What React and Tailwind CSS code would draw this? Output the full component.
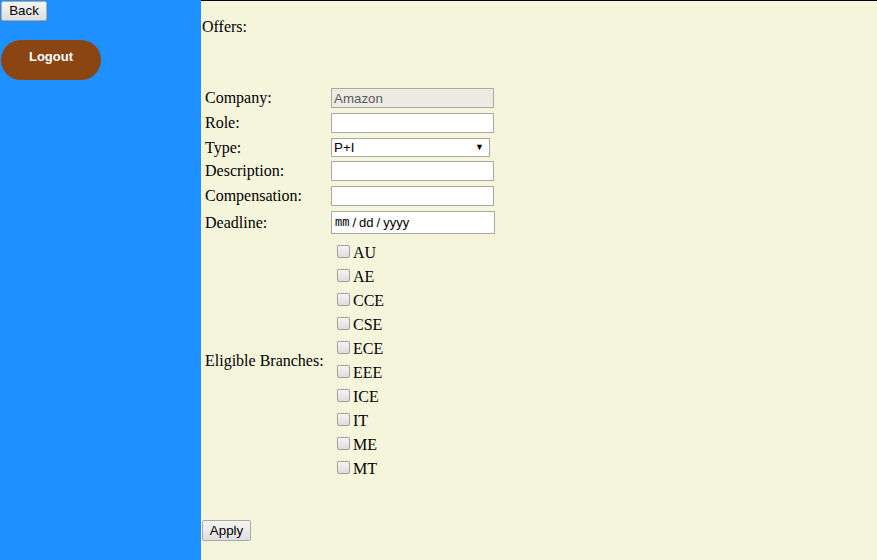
import React from "react";

const serif = { fontFamily: '"Liberation Serif", "Times New Roman", serif' };

function Btn({ children, className = "" }) {
  return (
    <button
      className={
        "flex items-center justify-center border border-[#a9a9a9] rounded-[2px] bg-gradient-to-b from-[#f6f6f6] to-[#dedede] text-[13.33px] text-black leading-none font-['Liberation_Sans',Arial,sans-serif] " +
        className
      }
    >
      {children}
    </button>
  );
}

function Row({ label, children, h, mt }) {
  return (
    <div className={"flex items-center " + h + " " + mt}>
      <div className="w-[129px] shrink-0 pl-[3px] text-[16px] leading-[18px] text-black" style={serif}>
        {label}
      </div>
      {children}
    </div>
  );
}

const inputBase =
  "h-full border border-[#a9a9a9] font-['Liberation_Sans',Arial,sans-serif] text-[13.33px] flex items-center px-[2px]";
const inputCls = inputBase + " bg-white";

const branches = ["AU", "AE", "CCE", "CSE", "ECE", "EEE", "ICE", "IT", "ME", "MT"];

export default function App() {
  return (
    <div className="flex h-[560px] w-[877px] overflow-hidden">
      <div className="w-[201px] shrink-0 bg-[#1e90ff] flex flex-col items-start pt-[1px]">
        <Btn className="ml-[1px] h-[20px] w-[46px]">Back</Btn>
        <button className="mt-[19px] ml-[1px] h-[40px] w-[100px] rounded-full bg-[#8b4513] text-white font-bold text-[13px] pb-[6px] font-['Liberation_Sans',Arial,sans-serif]">
          Logout
        </button>
      </div>
      <div className="flex-1 bg-[#f5f5dc] border-t border-black pl-[1px] flex flex-col">
        <div className="mt-[17px] text-[16px] leading-[18px] text-black" style={serif}>
          Offers:
        </div>
        <Row label="Company:" h="h-[20px]" mt="mt-[52px]">
          <div className={inputBase + " w-[163px] bg-[#ebebe4] text-[#5a5a5a] pt-[1px]"}>Amazon</div>
        </Row>
        <Row label="Role:" h="h-[20px]" mt="mt-[5px]">
          <div className={inputCls + " w-[163px]"} />
        </Row>
        <Row label="Type:" h="h-[19px]" mt="mt-[5px]">
          <div className={inputCls + " w-[159px] justify-between pr-[5px] text-black"}>
            <span>P+I</span>
            <span className="text-[9px]">▼</span>
          </div>
        </Row>
        <Row label="Description:" h="h-[20px]" mt="mt-[4px]">
          <div className={inputCls + " w-[163px]"} />
        </Row>
        <Row label="Compensation:" h="h-[20px]" mt="mt-[5px]">
          <div className={inputCls + " w-[163px]"} />
        </Row>
        <Row label="Deadline:" h="h-[23px]" mt="mt-[5px]">
          <div className={inputCls + " w-[164px] pl-[3px]"}>
            <span className="font-['Liberation_Mono','DejaVu_Sans_Mono',monospace] text-[12px] text-black">mm</span>
            <span className="mx-[3px] text-[13px] text-black">/</span>
            <span className="font-['Liberation_Sans',Arial,sans-serif] text-[13px] text-black">dd</span>
            <span className="mx-[3px] text-[13px] text-black">/</span>
            <span className="font-['Liberation_Sans',Arial,sans-serif] text-[13px] text-black">yyyy</span>
          </div>
        </Row>
        <div className="flex items-center mt-[5px]">
          <div className="w-[129px] shrink-0 pl-[3px] pt-[4px] text-[16px] leading-[18px] text-black" style={serif}>
            Eligible Branches:
          </div>
          <div className="flex flex-col">
            {branches.map((b) => (
              <div key={b} className="h-[24px] flex items-center pl-[6px]">
                <span className="w-[13px] h-[13px] rounded-[2px] border border-[#a0a0a0] bg-gradient-to-b from-[#f4f4f4] to-[#dcdcdc] mr-[3px]" />
                <span className="text-[16px] leading-[18px] text-black mt-[4px]" style={serif}>
                  {b}
                </span>
              </div>
            ))}
          </div>
        </div>
        <Btn className="mt-[41px] h-[21px] w-[49px]">Apply</Btn>
      </div>
    </div>
  );
}
